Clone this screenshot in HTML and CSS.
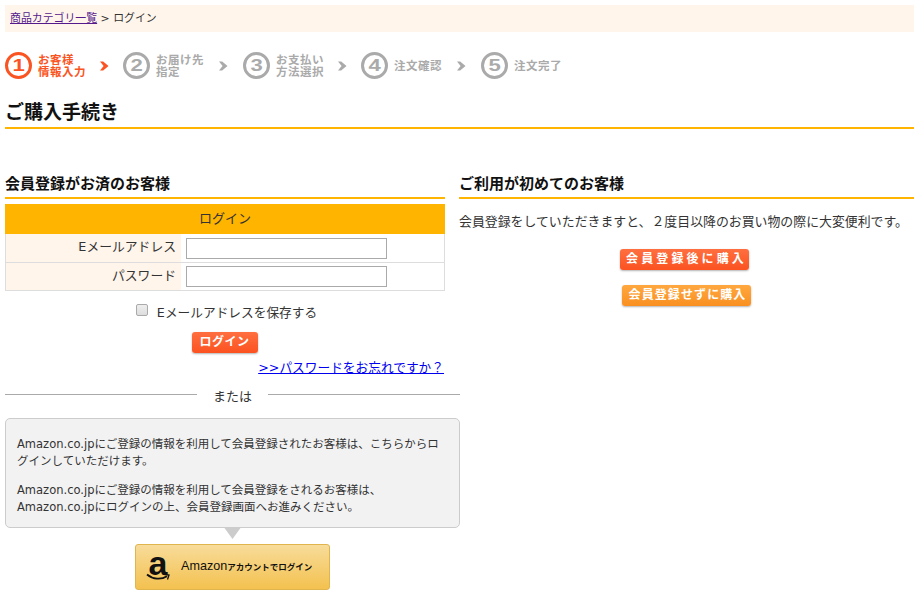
FILE: index.html
```html
<!DOCTYPE html>
<html lang="ja">
<head>
<meta charset="utf-8">
<title>ご購入手続き</title>
<link rel="stylesheet" href="styles.css">
</head>
<body>
<nav class="crumb"><a href="#">商品カテゴリ一覧</a> &gt; ログイン</nav>
<ol class="steps">
  <li class="step current"><span class="num"><span class="dig">1</span></span><span class="lbl">お客様<br>情報入力</span></li>
  <li class="chev current"><svg width="9" height="10" viewBox="0 0 9 10"><path d="M0 .5h3.200L8.500 5 3.200 9.500H0L3.600 5z"/></svg></li>
  <li class="step"><span class="num"><span class="dig">2</span></span><span class="lbl">お届け先<br>指定</span></li>
  <li class="chev wide"><svg width="9" height="10" viewBox="0 0 9 10"><path d="M0 .5h3.200L8.500 5 3.200 9.500H0L3.600 5z"/></svg></li>
  <li class="step"><span class="num"><span class="dig">3</span></span><span class="lbl">お支払い<br>方法選択</span></li>
  <li class="chev"><svg width="9" height="10" viewBox="0 0 9 10"><path d="M0 .5h3.200L8.500 5 3.200 9.500H0L3.600 5z"/></svg></li>
  <li class="step"><span class="num"><span class="dig">4</span></span><span class="lbl">注文確認</span></li>
  <li class="chev wide"><svg width="9" height="10" viewBox="0 0 9 10"><path d="M0 .5h3.200L8.500 5 3.200 9.500H0L3.600 5z"/></svg></li>
  <li class="step"><span class="num"><span class="dig">5</span></span><span class="lbl">注文完了</span></li>
</ol>
<h1 class="title">ご購入手続き</h1>
<main class="cols">
  <section class="left">
    <h2 class="head narrow">会員登録がお済のお客様</h2>
    <div class="login">
      <div class="login-head">ログイン</div>
      <div class="row"><label class="key">Eメールアドレス</label><div class="val"><input class="field" type="text"></div></div>
      <div class="row"><label class="key">パスワード</label><div class="val"><input class="field" type="password"></div></div>
    </div>
    <label class="save"><input type="checkbox"><span>Eメールアドレスを保存する</span></label>
    <div class="btn-wrap"><a class="btn btn-login" href="#">ログイン</a></div>
    <div class="forgot"><a href="#">&gt;&gt;パスワードをお忘れですか？</a></div>
    <div class="or"><span>または</span></div>
    <div class="note">
      <p>Amazon.co.jpにご登録の情報を利用して会員登録されたお客様は、こちらからログインしていただけます。</p>
      <p>Amazon.co.jpにご登録の情報を利用して会員登録をされるお客様は、<br>Amazon.co.jpにログインの上、会員登録画面へお進みください。</p>
    </div>
    <div class="tri"></div>
    <a class="amazon" href="#">
      <span class="amz-logo"><span class="amz-a">a</span><svg class="amz-smile" width="24" height="9" viewBox="0 0 24 9"><path d="M1 1.500c6 5 14 5.500 20 1.800" fill="none" stroke="#111" stroke-width="1.800"/><path d="M18.500 1.500l4.500.5-1.500 4.500" fill="none" stroke="#111" stroke-width="1.300"/></svg></span>
      <span class="amz-text">Amazon<small>アカウントでログイン</small></span>
    </a>
  </section>
  <section class="right">
    <h2 class="head">ご利用が初めてのお客様</h2>
    <p class="intro">会員登録をしていただきますと、２度目以降のお買い物の際に大変便利です。</p>
    <div class="actions">
      <a class="btn btn-reg" href="#">会員登録後に購入</a>
      <a class="btn btn-guest" href="#">会員登録せずに購入</a>
    </div>
  </section>
</main>
</body>
</html>
```
FILE: styles.css
```css
* { box-sizing: border-box; }
html, body { margin: 0; padding: 0; }
body {
  width: 921px;
  height: 596px;
  padding: 5px 7px 0 5px;
  font-family: "DejaVu Sans", "Noto Sans CJK JP", sans-serif;
  font-size: 13px;
  color: #333;
  background: #fff;
  overflow: hidden;
}
.crumb {
  height: 27px;
  padding-left: 5px;
  background: #fff5eb;
  font-size: 10.900px;
  line-height: 28px;
}
.crumb a { color: #551a8b; }
.steps {
  list-style: none;
  margin: 20px 0 0;
  padding: 0;
  display: flex;
  align-items: center;
  height: 27px;
}
.step { display: flex; align-items: center; color: #aaa; }
.step.current { color: #fb5423; }
.num {
  width: 27px;
  height: 27px;
  border: 3px solid currentColor;
  border-radius: 50%;
  font-family: "Liberation Sans", sans-serif;
  font-weight: 700;
  font-size: 17px;
  line-height: 21px;
  text-align: center;
}
.dig { display: inline-block; transform: scaleX(1.3); }
.lbl {
  margin: 0 0 2px 6px;
  font-family: "Noto Sans CJK JP", sans-serif;
  font-weight: 700;
  font-size: 11.500px;
  letter-spacing: .5px;
  line-height: 12px;
  white-space: nowrap;
}
.chev { display: flex; margin: 0 14px; fill: #aaa; }
.chev.wide { margin: 0 15px; }
.chev.current { fill: #fb5423; }
.title {
  margin: 19px 0 0;
  height: 31px;
  border-bottom: 2px solid #ffb400;
  font-size: 19px;
  font-weight: 700;
  line-height: 28px;
  color: #111;
}
.cols { display: flex; margin-top: 42px; }
.left { width: 455px; flex: none; }
.right { width: 455px; flex: none; margin-left: -1px; }
.head {
  margin: 0;
  height: 28px;
  border-bottom: 2px solid #ffb400;
  font-size: 15px;
  font-weight: 700;
  line-height: 27px;
  color: #111;
}
.head.narrow { width: 440px; }
.login { width: 440px; margin-top: 5px; border: 1px solid #ddd; border-top: 0; }
.login-head {
  margin: 0 -1px;
  height: 30px;
  background: #ffb400;
  font-size: 13px;
  line-height: 29px;
  text-align: center;
}
.row { display: flex; height: 28px; }
.row + .row { border-top: 1px solid #ddd; }
.key {
  width: 175px;
  padding-right: 5px;
  background: #fff5eb;
  font-size: 12.800px;
  text-align: right;
  line-height: 26px;
}
.row + .row .key { line-height: 25px; }
.val { padding: 4px 0 0 5px; }
.row + .row .val { padding-top: 3px; }
.field {
  display: block;
  width: 201px;
  height: 21px;
  border: 1px solid #aaa;
  background: #fff;
}
.save {
  display: flex;
  align-items: center;
  justify-content: center;
  width: 440px;
  height: 20px;
  margin-top: 12px;
  padding-left: 3px;
  font-size: 12.700px;
  line-height: 20px;
}
.save input {
  appearance: none;
  margin: 0 9px 6px 0;
  width: 12px;
  height: 12px;
  border: 1px solid #aaa;
  border-radius: 2px;
  background: linear-gradient(#eee, #ddd);
}
.btn-wrap { width: 440px; margin-top: 9px; display: flex; justify-content: center; }
.btn {
  display: block;
  height: 21px;
  border-radius: 3px;
  color: #fff;
  font-size: 12px;
  font-weight: 700;
  line-height: 21px;
  text-align: center;
  text-decoration: none;
  white-space: nowrap;
  box-shadow: 0 1px 2px rgba(0, 0, 0, .3);
}
.btn-login { width: 66px; padding-right: 1px; letter-spacing: .5px; background: linear-gradient(#ff6f40, #fb5220); }
.forgot { width: 439px; margin-top: 6px; font-size: 12.700px; text-align: right; line-height: 18px; }
.forgot a { color: #00e; }
.or {
  display: flex;
  align-items: center;
  gap: 16px;
  margin-top: 8px;
  height: 18px;
}
.or span { padding-top: 2px; }
.or::before, .or::after { content: ""; flex: 1; border-top: 1px solid #aaa; }
.note {
  margin-top: 15px;
  height: 110px;
  padding: 17px 11px 0;
  border: 1px solid #ccc;
  border-radius: 5px;
  background: #f2f2f2;
  font-size: 11.500px;
  line-height: 17px;
}
.note p { margin: 0 0 12px; }
.tri {
  width: 0;
  margin: 0 auto;
  border-top: 11px solid #ccc;
  border-left: 8px solid transparent;
  border-right: 8px solid transparent;
  transform: translateX(-.5px);
}
.amazon {
  display: flex;
  align-items: center;
  width: 195px;
  height: 46px;
  margin: 5px 0 0 130px;
  border: 1px solid #e0b54e;
  border-radius: 3px;
  background: linear-gradient(#f8dc9a, #f3c14f);
  color: #111;
  text-decoration: none;
}
.amz-logo { position: relative; width: 24px; height: 36px; margin-left: 10px; flex: none; }
.amz-a {
  display: block;
  font-family: "Liberation Sans", sans-serif;
  font-weight: 700;
  font-size: 34px;
  line-height: 28px;
  text-align: center;
  color: #111;
}
.amz-smile { position: absolute; left: 0; top: 24px; }
.amz-text {
  margin: 0 0 2px 11px;
  font-family: "Liberation Sans", "Noto Sans CJK JP", sans-serif;
  font-size: 12.600px;
  white-space: nowrap;
}
.amz-text small { font-family: "Noto Sans CJK JP", sans-serif; font-size: 8.500px; font-weight: 700; }
.intro { margin: 13px 0 0; font-size: 12.900px; line-height: 20px; white-space: nowrap; }
.actions { display: flex; flex-direction: column; align-items: center; margin-top: 17px; }
.btn-reg { width: 129px; margin-right: 4px; padding-left: 4px; letter-spacing: 3.100px; background: linear-gradient(#ff6f40, #fb5220); }
.btn-guest { width: 129px; margin-top: 15px; padding-left: 2px; letter-spacing: 1.100px; background: linear-gradient(#ffa840, #f98f20); }
```
